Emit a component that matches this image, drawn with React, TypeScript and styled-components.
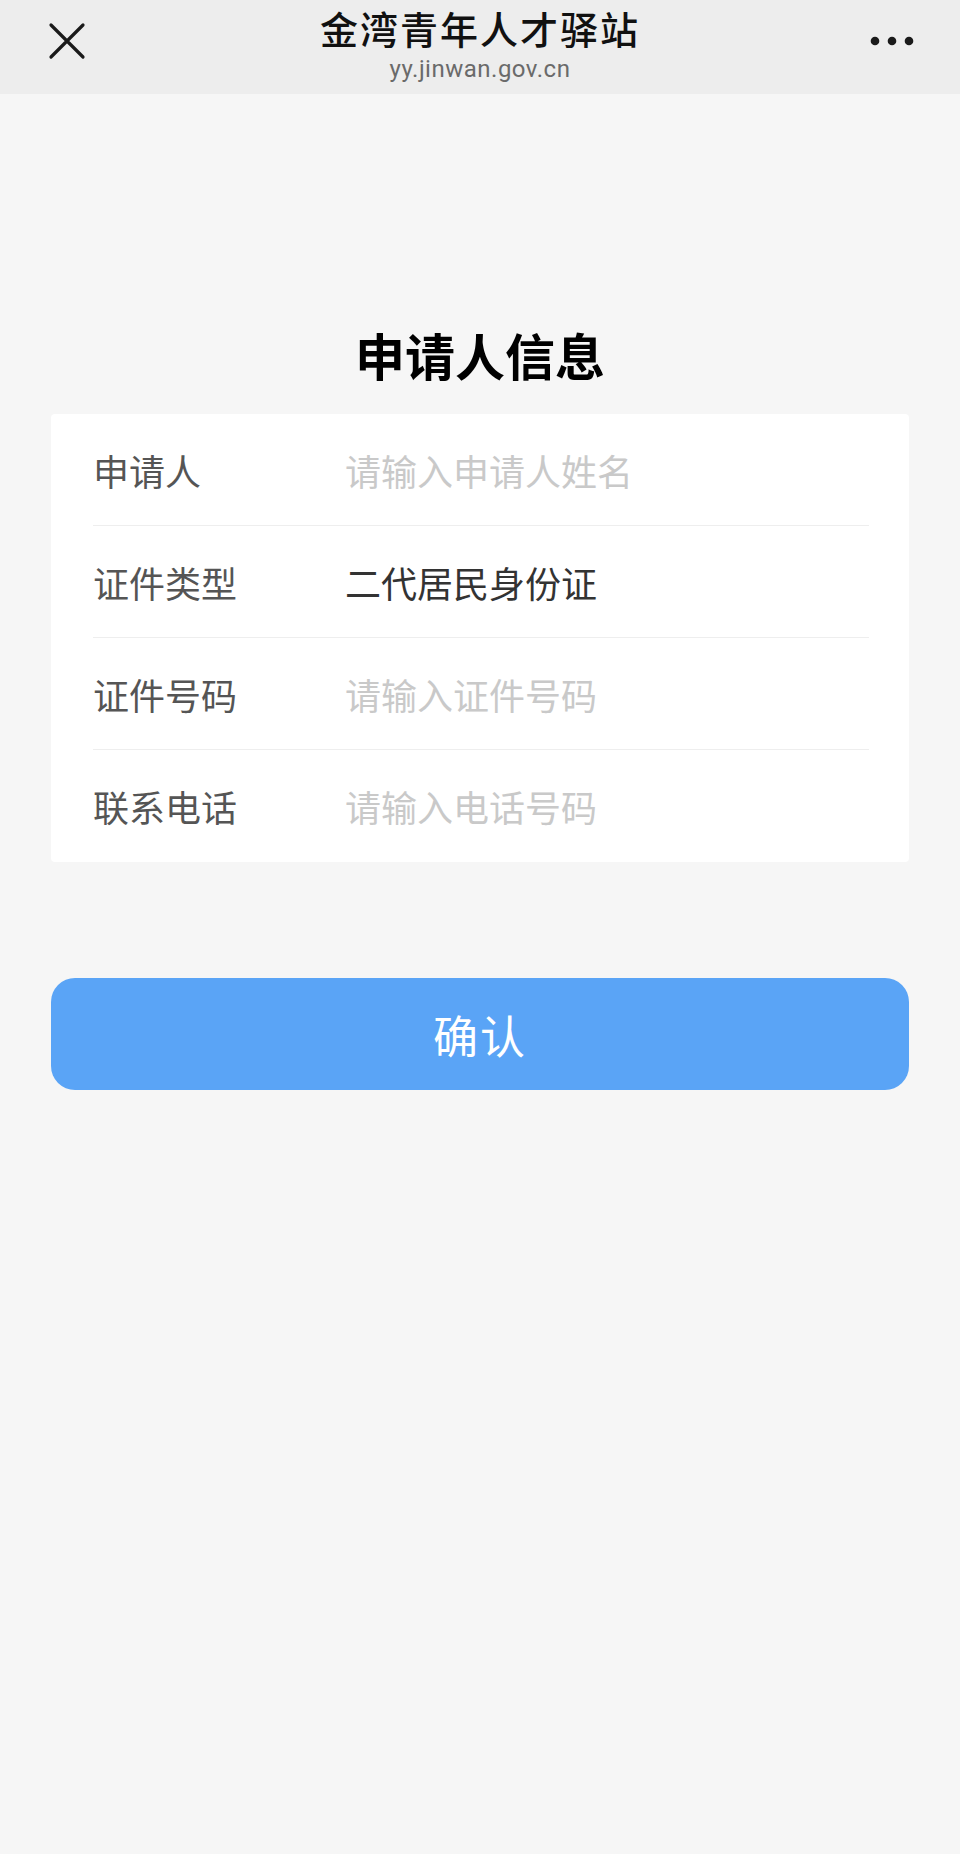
import React from "react";
import styled, { createGlobalStyle } from "styled-components";

const Global = createGlobalStyle`
  html, body { margin: 0; padding: 0; background: #f6f6f6; }
  body { font-family: "Noto Sans CJK SC", "Noto Sans", sans-serif; }
  * { box-sizing: border-box; }
`;

const Page = styled.div`
  width: 960px;
  min-height: 1854px;
  background: #f6f6f6;
  display: flex;
  flex-direction: column;
`;

const NavBar = styled.header`
  height: 94px;
  background: #ededed;
  display: grid;
  grid-template-columns: 120px 1fr 120px;
  align-items: center;
`;

const NavButton = styled.div<{ $align: "start" | "end" }>`
  display: flex;
  justify-content: ${(p) => (p.$align === "start" ? "flex-start" : "flex-end")};
  padding: ${(p) => (p.$align === "start" ? "0 0 12px 48px" : "0 46px 12px 0")};
  align-items: center;
`;

const NavTitles = styled.div`
  align-self: start;
  display: flex;
  flex-direction: column;
  align-items: center;
`;

const NavTitle = styled.div`
  font-size: 38px;
  line-height: 55px;
  color: #111;
  font-weight: 500;
  letter-spacing: 2px;
`;

const NavSub = styled.div`
  font-family: "Roboto", "Noto Sans", sans-serif;
  font-size: 24px;
  line-height: 28px;
  color: #6a6a6a;
  letter-spacing: 0.5px;
`;

const Content = styled.main`
  display: flex;
  flex-direction: column;
  padding: 0 51px;
`;

const Heading = styled.h1`
  margin: 228px 0 0;
  text-align: center;
  font-size: 50px;
  line-height: 64px;
  font-weight: 700;
  color: #000;
`;

const Card = styled.section`
  margin-top: 28px;
  background: #fff;
  border-radius: 4px;
  padding: 0 40px 0 42px;
`;

const Row = styled.div`
  height: 112px;
  display: flex;
  align-items: center;
  border-bottom: 1px solid #eeeeee;
  &:last-child { border-bottom: none; }
`;

const Label = styled.div`
  width: 252px;
  font-size: 36px;
  color: #555;
`;

const Value = styled.div<{ $placeholder?: boolean }>`
  font-size: 36px;
  color: ${(p) => (p.$placeholder ? "#c9c9c9" : "#333")};
`;

const Confirm = styled.button`
  margin-top: 116px;
  height: 112px;
  border: none;
  border-radius: 24px;
  background: #5aa4f6;
  color: #fff;
  font-family: "Noto Sans CJK SC", sans-serif;
  font-size: 45px;
  letter-spacing: 2px;
  cursor: pointer;
`;

const rows = [
  { label: "申请人", value: "请输入申请人姓名", placeholder: true },
  { label: "证件类型", value: "二代居民身份证", placeholder: false },
  { label: "证件号码", value: "请输入证件号码", placeholder: true },
  { label: "联系电话", value: "请输入电话号码", placeholder: true },
];

export default function App() {
  return (
    <Page>
      <Global />
      <NavBar>
        <NavButton $align="start">
          <svg width="38" height="38" viewBox="0 0 38 38">
            <path d="M3 3 L35 35 M35 3 L3 35" stroke="#1a1a1a" strokeWidth="3.2" strokeLinecap="round" />
          </svg>
        </NavButton>
        <NavTitles>
          <NavTitle>金湾青年人才驿站</NavTitle>
          <NavSub>yy.jinwan.gov.cn</NavSub>
        </NavTitles>
        <NavButton $align="end">
          <svg width="44" height="10" viewBox="0 0 44 10">
            <circle cx="5" cy="5" r="4.3" fill="#1a1a1a" />
            <circle cx="22" cy="5" r="4.3" fill="#1a1a1a" />
            <circle cx="39" cy="5" r="4.3" fill="#1a1a1a" />
          </svg>
        </NavButton>
      </NavBar>
      <Content>
        <Heading>申请人信息</Heading>
        <Card>
          {rows.map((r) => (
            <Row key={r.label}>
              <Label>{r.label}</Label>
              <Value $placeholder={r.placeholder}>{r.value}</Value>
            </Row>
          ))}
        </Card>
        <Confirm>确认</Confirm>
      </Content>
    </Page>
  );
}
